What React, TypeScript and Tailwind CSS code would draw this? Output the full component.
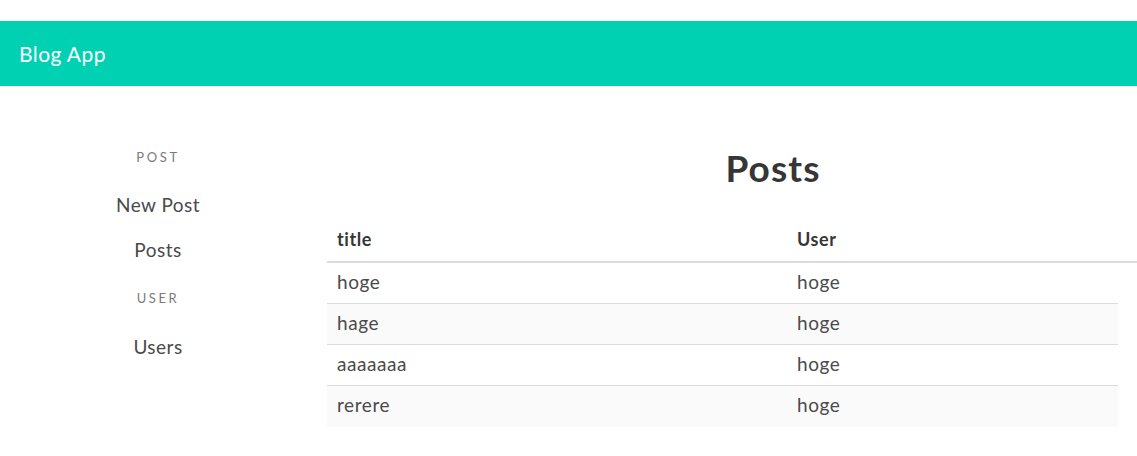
const rows = [
  { title: "hoge", user: "hoge" },
  { title: "hage", user: "hoge" },
  { title: "aaaaaaa", user: "hoge" },
  { title: "rerere", user: "hoge" },
];

function Sidebar() {
  return (
    <aside className="w-[316px] shrink-0 pt-[61px] text-center">
      <p className="h-5 text-[13px] leading-5 tracking-[0.2em] text-[#7a7a7a]">POST</p>
      <a className="mt-6 block h-7 text-[19px] leading-7 tracking-[0.025em] text-[#4a4a4a]">New Post</a>
      <a className="mt-[17px] block h-7 text-[19px] leading-7 tracking-[0.025em] text-[#4a4a4a]">Posts</a>
      <p className="mt-6 h-5 text-[13px] leading-5 tracking-[0.2em] text-[#7a7a7a]">USER</p>
      <a className="mt-[25px] block h-7 text-[19px] leading-7 tracking-[0.025em] text-[#4a4a4a]">Users</a>
    </aside>
  );
}

function PostsTable() {
  return (
    <div className="text-[19px] tracking-[0.03em] text-[#4a4a4a]">
      <div className="flex h-[45px] w-[810px] items-center border-b-2 border-[#dbdbdb] pb-px font-bold text-[#363636]">
        <div className="w-[460px] pl-[10px] text-[18px]">title</div>
        <div className="pl-[10px] text-[18px]">User</div>
      </div>
      {rows.map((row, i) => (
        <div
          key={i}
          className={`flex h-[41px] w-[791px] items-center pb-[2px] ${
            i < rows.length - 1 ? "border-b border-[#dbdbdb]" : ""
          } ${i % 2 === 1 ? "bg-[#fafafa]" : ""}`}
        >
          <div className="w-[460px] pl-[10px]">{row.title}</div>
          <div className="pl-[10px]">{row.user}</div>
        </div>
      ))}
    </div>
  );
}

export default function App() {
  return (
    <div className="h-[456px] w-[1137px] overflow-hidden bg-white font-['Lato',sans-serif]">
      <header className="mt-[21px] flex h-[65px] items-center bg-[#00d1b2] pl-[19px] text-[21px] tracking-[0.02em] text-white">
        Blog App
      </header>
      <div className="flex">
        <Sidebar />
        <main className="ml-[11px] pt-[62px]">
          <h1 className="w-[892px] text-center text-[37px] font-bold leading-10 tracking-[0.03em] text-[#363636]">Posts</h1>
          <div className="mt-[30px]">
            <PostsTable />
          </div>
        </main>
      </div>
    </div>
  );
}
